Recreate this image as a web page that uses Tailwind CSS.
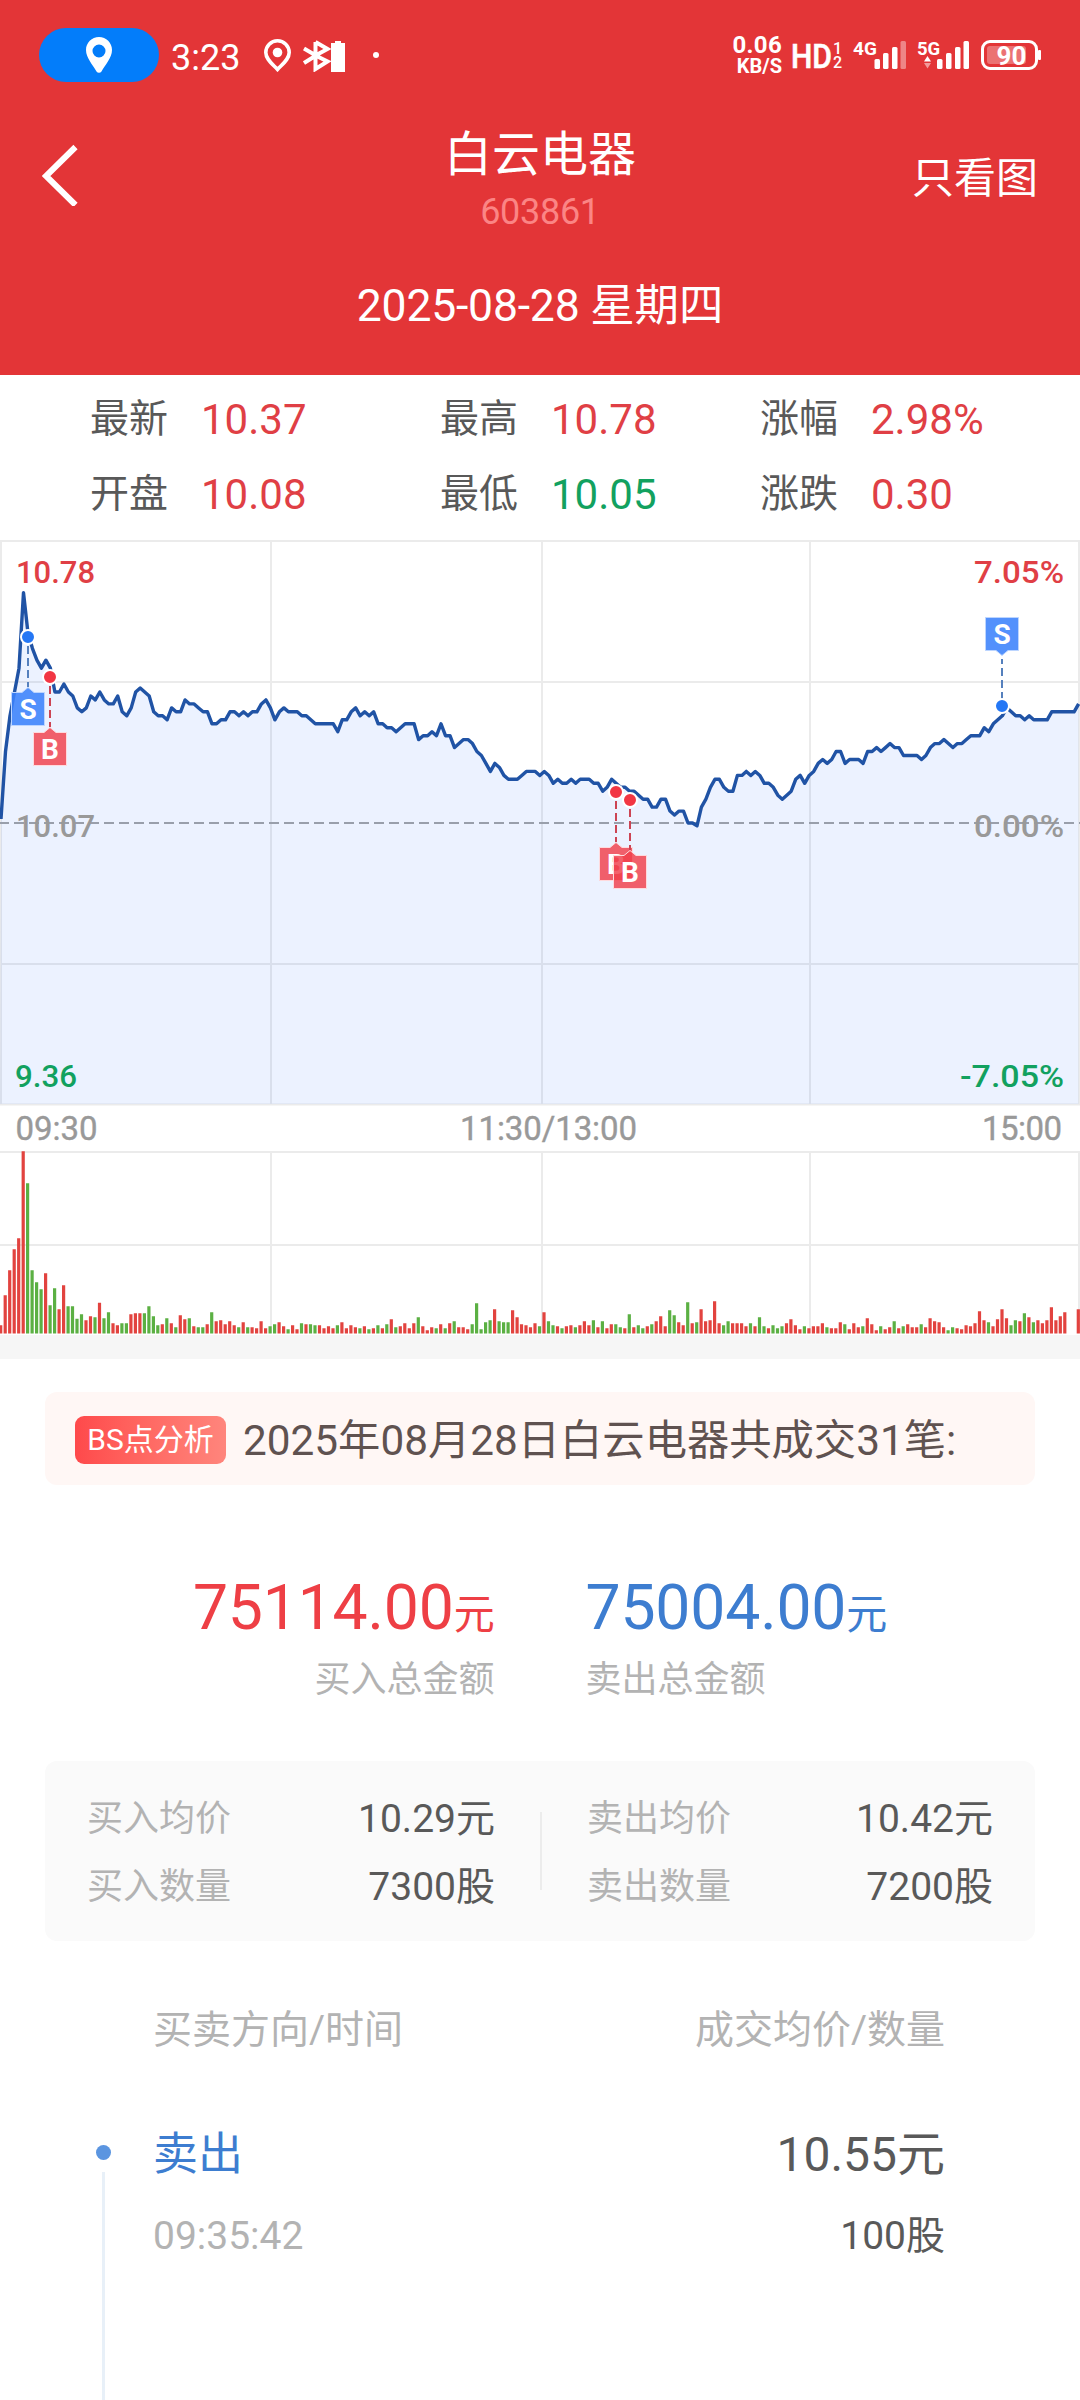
<!DOCTYPE html>
<html lang="zh-CN">
<head>
  <meta charset="UTF-8">
  <meta name="viewport" content="width=device-width, initial-scale=1.0">
  <title>白云电器 603861</title>
  <script src="https://cdn.jsdelivr.net/npm/@tailwindcss/browser@4"></script>
</head>
<body class="w-[1080px] h-[2400px] overflow-hidden bg-white font-['Roboto','Noto_Sans_CJK_SC',sans-serif] text-[#595959]">
  <header class="h-[375px] bg-[#e33537] text-white">
    <!-- Status bar -->
    <div class="flex h-[110px] items-center justify-between pl-[39px] pr-[39px]">
      <div class="flex items-center">
        <div class="flex h-[54px] w-[120px] items-center justify-center rounded-full bg-[#037dfa]">
          <svg class="h-9 w-[26px]" viewBox="0 0 26 36">
            <path fill="#fff" fill-rule="evenodd" d="M13 0C5.800 0 0 5.800 0 13c0 8 7 15 10.500 21.500a3 3 0 0 0 5 0C19 28 26 21 26 13 26 5.800 20.200 0 13 0Zm0 7.500a6.500 6.500 0 1 1 0 13 6.500 6.500 0 0 1 0-13Z"/>
          </svg>
        </div>
        <span class="ml-3 w-[69px] pt-1.5 text-4xl leading-10">3:23</span>
        <svg class="ml-6 h-[33px] w-[27px]" viewBox="0 0 27 33">
          <path fill="none" stroke="#fff" stroke-width="3.600" d="M13.500 1.800C7 1.800 1.800 7 1.800 13.500c0 6.500 6 11 11.700 17 5.700-6 11.700-10.500 11.700-17C25.200 7 20 1.800 13.500 1.800Z"/>
          <circle cx="13.500" cy="13.500" r="4.800" fill="#fff"/>
        </svg>
        <svg class="ml-3 h-[33px] w-[42px]" viewBox="0 0 42 33">
          <path fill="none" stroke="#fff" stroke-width="4" d="M1 9.500 13 16.500 1 24M12.500 3v27l12-7.500L12.500 16.500l12-6.500L12.500 3"/>
          <path fill="#fff" d="M28 4h4V2h6v2h4v29H28Z"/>
        </svg>
        <span class="ml-7 size-1.5 rounded-full bg-white"></span>
      </div>
      <div class="flex items-center">
        <div class="flex w-[49px] flex-col items-end font-bold">
          <span class="text-2xl leading-[22px] tracking-[0.3px]">0.06</span>
          <span class="text-xl leading-[21px]">KB/S</span>
        </div>
        <svg class="ml-[9px] h-[34px] w-[54px] overflow-visible" viewBox="0 0 54 34" fill="#fff">
          <text x="0" y="30" font-size="33" font-weight="500" stroke="#fff" stroke-width=".6" textLength="41" lengthAdjust="spacingAndGlyphs">HD</text>
          <text x="42" y="16" font-size="16" font-weight="500">1</text>
          <text x="42" y="29.500" font-size="16" font-weight="500">2</text>
        </svg>
        <svg class="ml-2 h-7 w-[54px] overflow-visible" viewBox="0 0 54 28" fill="#fff">
          <text x="0" y="14" font-size="19" font-weight="700">4G</text>
          <rect x="21.500" y="18" width="5.500" height="10" rx="1.500"/>
          <rect x="30" y="12" width="5.500" height="16" rx="1.500"/>
          <rect x="39" y="6" width="5.500" height="22" rx="1.500"/>
          <rect x="47.500" y="0" width="5.500" height="28" rx="1.500" fill-opacity=".4"/>
        </svg>
        <svg class="ml-[11px] h-7 w-[53px] overflow-visible" viewBox="0 0 53 28" fill="#fff">
          <text x="-1" y="14" font-size="18.500" font-weight="700">5G</text>
          <path d="M6 20.500 9.500 15l3.500 5.500Z"/>
          <path fill-opacity=".5" d="M6 22h7l-3.500 5.500Z"/>
          <rect x="19" y="18" width="5.500" height="10" rx="1.500"/>
          <rect x="28" y="12" width="5.500" height="16" rx="1.500"/>
          <rect x="37" y="6" width="5.500" height="22" rx="1.500"/>
          <rect x="45.500" y="0" width="5.500" height="28" rx="1.500"/>
        </svg>
        <svg class="ml-[10px] h-[30px] w-[60px]" viewBox="0 0 60 30">
          <rect x="1.500" y="1.500" width="54" height="27" rx="7.500" fill="none" stroke="#fff" stroke-width="3"/>
          <rect x="6" y="6" width="39" height="18" rx="3" fill="#fff" fill-opacity=".3"/>
          <rect x="57" y="10" width="3" height="10" rx="1" fill="#fff"/>
          <text x="15.500" y="24.500" font-size="26" font-weight="700" fill="#fff">90</text>
        </svg>
      </div>
    </div>

    <!-- Title bar -->
    <div class="grid h-[130px] grid-cols-[1fr_400px_1fr] items-center">
      <svg class="ml-[42px] h-[62px] w-9" viewBox="0 0 36 62" fill="none" stroke="#fff" stroke-width="6">
        <path d="M33.500 3 4 32 33.500 61"/>
      </svg>
      <div class="flex flex-col items-center pt-[7px]">
        <h1 class="text-5xl leading-[66px]">白云电器</h1>
        <p class="text-4xl leading-[48px] tracking-[-0.3px] text-[#fb8585]">603861</p>
      </div>
      <button class="justify-self-end pt-2 pr-[42px] text-[42px] leading-[60px]">只看图</button>
    </div>
    <p class="pt-9 text-center text-[44.500px] leading-[60px] tracking-[-0.2px]">2025-08-28 星期四</p>
  </header>

  <!-- Quotes -->
  <section class="grid h-[165px] grid-cols-[350px_320px_1fr] grid-rows-[75px_75px] pt-[7px] pl-[90px] text-[42px] text-[#e03f45]">
    <div class="flex items-center"><span class="w-[111px] text-[39px] text-[#595959]">最新</span>10.37</div>
    <div class="flex items-center"><span class="w-[111px] text-[39px] text-[#595959]">最高</span>10.78</div>
    <div class="flex items-center"><span class="w-[111px] text-[39px] text-[#595959]">涨幅</span>2.98%</div>
    <div class="flex items-center"><span class="w-[111px] text-[39px] text-[#595959]">开盘</span>10.08</div>
    <div class="flex items-center text-[#12a15f]"><span class="w-[111px] text-[39px] text-[#595959]">最低</span>10.05</div>
    <div class="flex items-center"><span class="w-[111px] text-[39px] text-[#595959]">涨跌</span>0.30</div>
  </section>

  <!-- Price chart, y = 283 is the previous close -->
  <svg class="block h-[566px] w-[1080px]" viewBox="0 0 1080 566">
    <g fill="none" stroke="#ebebeb" stroke-width="2">
      <path d="M0 1H1080M0 142H1080M0 424H1080M0 564.500H1080"/>
      <path d="M1 0V565M271 0V565M542 0V565M810 0V565M1079 0V565"/>
    </g>
    <path id="area" fill="#2e74ff" fill-opacity=".09"/>
    <path d="M0 283H1080" stroke="#999fab" stroke-width="2" stroke-dasharray="10 5" stroke-dashoffset="1"/>
    <path id="line" fill="none" stroke="#2053a5" stroke-width="3.400" stroke-linejoin="round"/>
    <g font-size="32" font-weight="500">
      <text x="16" y="42.500" fill="#e03f45" textLength="79" lengthAdjust="spacingAndGlyphs">10.78</text>
      <text x="16" y="296.500" fill="#999" textLength="79" lengthAdjust="spacingAndGlyphs">10.07</text>
      <text x="15" y="547" fill="#12a15f" textLength="62" lengthAdjust="spacingAndGlyphs">9.36</text>
      <text x="974" y="42.500" fill="#e03f45" textLength="90" lengthAdjust="spacingAndGlyphs">7.05%</text>
      <text x="974" y="296.500" fill="#999" textLength="90" lengthAdjust="spacingAndGlyphs">0.00%</text>
      <text x="960" y="547" fill="#12a15f" textLength="104" lengthAdjust="spacingAndGlyphs">-7.05%</text>
    </g>
    <!-- Trade markers -->
    <g stroke-width="2" font-size="28" font-weight="700" text-anchor="middle">
      <g transform="translate(28 97)">
        <path d="M0 9V50" stroke="#5580bd" stroke-dasharray="8 4"/>
        <circle r="7" fill="#2477f5" stroke="#fff"/>
        <path d="M-16.500 55.500H-6L0 50.500 6 55.500H16.500V88.500H-16.500Z" fill="#3b82fc" fill-opacity=".88" stroke="#bcd5ff" stroke-width="1"/>
        <text y="82" fill="#fff">S</text>
      </g>
      <g transform="translate(50 137)">
        <path d="M0 9V50" stroke="#cc4453" stroke-dasharray="8 4"/>
        <circle r="7" fill="#f23643" stroke="#fff"/>
        <path d="M-16.500 55.500H-6L0 50.500 6 55.500H16.500V88.500H-16.500Z" fill="#f03e4a" fill-opacity=".82" stroke="#ffdadd" stroke-width="1"/>
        <text y="82" fill="#fff">B</text>
      </g>
      <g transform="translate(616 252)">
        <path d="M0 9V50" stroke="#cc4453" stroke-dasharray="8 4"/>
        <circle r="7" fill="#f23643" stroke="#fff"/>
        <path d="M-16.500 55.500H-6L0 50.500 6 55.500H16.500V88.500H-16.500Z" fill="#f03e4a" fill-opacity=".82" stroke="#ffdadd" stroke-width="1"/>
        <text y="82" fill="#fff">B</text>
      </g>
      <g transform="translate(630 260)">
        <path d="M0 9V50" stroke="#cc4453" stroke-dasharray="8 4"/>
        <circle r="7" fill="#f23643" stroke="#fff"/>
        <path d="M-16.500 55.500H-6L0 50.500 6 55.500H16.500V88.500H-16.500Z" fill="#f03e4a" fill-opacity=".82" stroke="#ffdadd" stroke-width="1"/>
        <text y="82" fill="#fff">B</text>
      </g>
      <g transform="translate(1002 166)">
        <path d="M0 -6V-47" stroke="#5580bd" stroke-dasharray="8 4"/>
        <circle r="7" fill="#2477f5" stroke="#fff"/>
        <path d="M-16.500 -55.500H-6L0 -50.500 6 -55.500H16.500V-88.500H-16.500Z" fill="#3b82fc" fill-opacity=".88" stroke="#bcd5ff" stroke-width="1"/>
        <text y="-62" fill="#fff">S</text>
      </g>
    </g>
  </svg>

  <!-- Time axis -->
  <svg class="block h-[45px] w-[1080px]" viewBox="0 0 1080 45" font-size="33" fill="#999" stroke="#999" stroke-width=".4">
    <text x="15.500" y="34" textLength="82">09:30</text>
    <text x="460" y="34" textLength="177">11:30/13:00</text>
    <text x="982" y="34" textLength="80">15:00</text>
  </svg>

  <!-- Volume -->
  <svg class="block h-[184px] w-[1080px]" viewBox="0 0 1080 184">
    <g fill="none" stroke="#ebebeb" stroke-width="2">
      <path d="M0 1H1080M0 94H1080"/>
      <path d="M271 0V182M542 0V182M810 0V182M1079 0V182"/>
    </g>
    <path id="vol-up" stroke="#e2433f" stroke-width="3.200"/>
    <path id="vol-down" stroke="#5bb043" stroke-width="3.200"/>
  </svg>
  <div class="h-6 bg-[#f6f6f6]"></div>

  <main class="px-[45px] pt-[33px]">
    <div class="flex h-[93px] items-center rounded-xl bg-[#fff7f5] pl-[30px]">
      <span class="mt-0.5 flex h-12 w-[151px] items-center justify-center rounded-[9px] bg-linear-to-r from-[#fe494b] to-[#ff857c] text-3xl leading-none text-white">BS点分析</span>
      <p class="mt-1 ml-[17px] text-[42.300px] leading-[60px] text-[#5f5250]">2025年08月28日白云电器共成交31笔:</p>
    </div>

    <div class="grid grid-cols-2 gap-x-[91px] pt-[82px]">
      <div class="flex flex-col items-end text-[#ee3f45]">
        <p class="h-[82px] text-[62.500px] leading-[82px] tracking-[-0.2px]">75114.00<span class="text-[41px] leading-none">元</span></p>
        <p class="text-4xl leading-[62px] text-[#b3b3b3]">买入总金额</p>
      </div>
      <div class="flex flex-col text-[#3d7dd0]">
        <p class="h-[82px] text-[62.500px] leading-[82px] tracking-[-0.2px]">75004.00<span class="text-[41px] leading-none">元</span></p>
        <p class="text-4xl leading-[62px] text-[#b3b3b3]">卖出总金额</p>
      </div>
    </div>

    <div class="mt-[50px] flex h-[180px] items-center rounded-xl bg-[#fafafa] px-[42px] text-[39px] leading-[68px]">
      <div class="w-[408px] pt-1">
        <div class="flex justify-between"><span class="text-4xl leading-[68px] text-[#b3b3b3]">买入均价</span>10.29元</div>
        <div class="flex justify-between"><span class="text-4xl leading-[68px] text-[#b3b3b3]">买入数量</span>7300股</div>
      </div>
      <div class="mx-[45px] h-[78px] w-0.5 bg-[#ececec]"></div>
      <div class="flex-1 pt-1">
        <div class="flex justify-between"><span class="text-4xl leading-[68px] text-[#b3b3b3]">卖出均价</span>10.42元</div>
        <div class="flex justify-between"><span class="text-4xl leading-[68px] text-[#b3b3b3]">卖出数量</span>7200股</div>
      </div>
    </div>

    <div class="flex justify-between pt-[59px] pr-[90px] pl-[108px] text-[39px] leading-[60px] text-[#b3b3b3]">
      <span>买卖方向/时间</span>
      <span>成交均价/数量</span>
    </div>

    <div class="flex pt-[65px] pr-[90px]">
      <div class="flex w-[117px] flex-col items-center pt-[20px]">
        <span class="size-[15px] rounded-full bg-[#5b95e0]"></span>
        <span class="mt-3 h-[300px] w-[3px] bg-[#e8f0f8]"></span>
      </div>
      <div class="-ml-[9px] flex-1">
        <div class="flex h-[60px] items-center justify-between"><span class="text-[45px] text-[#3d7dd0]">卖出</span><span class="text-5xl">10.55元</span></div>
        <div class="mt-[21px] flex h-[60px] items-center justify-between text-[39px]"><span class="text-[#b3b3b3]">09:35:42</span><span>100股</span></div>
      </div>
    </div>
  </main>

  <script>
    // one value per minute, in ticks above the previous close
    const prices = [
      1, 18, 27, 33, 39, 58, 48, 44, 41, 39, 41, 39, 33, 33, 35, 33, 32, 29, 28, 29,
      32, 31, 33, 31, 30, 30, 32, 28, 27, 29, 33, 34, 33, 32, 28, 27, 27, 26, 29, 28,
      28, 31, 30, 30, 29, 28, 28, 25, 25, 26, 26, 28, 28, 27, 28, 27, 28, 28, 30, 31,
      29, 26, 28, 29, 28, 28, 28, 27, 27, 26, 25, 25, 25, 25, 25, 23, 26, 26, 28, 29,
      27, 28, 27, 28, 25, 25, 24, 24, 23, 24, 25, 25, 25, 21, 22, 22, 23, 22, 25, 22,
      22, 19, 20, 21, 21, 20, 18, 17, 15, 13, 15, 14, 12, 11, 11, 11, 12, 13, 13, 13,
      12, 13, 12, 10, 11, 10, 10, 11, 10, 11, 11, 11, 10, 10, 8, 9, 11, 10, 9, 9,
      8, 8, 7, 6, 6, 4, 4, 6, 6, 3, 2, 3, 3, 0, 0, -0.7, 4, 6, 9, 11,
      11, 9, 8, 8, 12, 12, 13, 12, 13, 12, 10, 10, 9, 7, 6, 7, 8, 11, 12, 10,
      12, 13, 15, 16, 15, 16, 18, 18, 15, 16, 16, 16, 15, 18, 18, 19, 18, 19, 20, 19,
      19, 17, 17, 17, 17, 16, 17, 19, 20, 20, 21, 20, 19, 20, 20, 21, 22, 22, 22, 24,
      23, 25, 26, 27, 29, 28, 27, 27, 26, 27, 26, 26, 26, 26, 28, 28, 28, 28, 28, 28,
      30
    ];

    // bar heights in thirds of a pixel, negative for a falling minute
    const volumes = [
      25, 115, 190, 253, 286, 547, -451, -190, -154, -133, 181, -85, -136, 73, 145, -82, -82, -44, -58, 40,
      52, -49, 92, -46, -64, 31, 25, -31, -31, 58, 61, 61, -61, -82, -52, -25, 28, -46, 31, -19,
      55, 43, -46, 22, -19, -19, 28, -64, 37, 40, 28, 37, 25, -19, 34, -19, 19, 16, 37, 16,
      -22, -28, 34, 22, -13, 25, 13, -31, 28, -28, -25, 25, 16, 22, 16, -25, 34, 16, 25, 19,
      -16, 22, -13, 16, -25, 16, -28, 43, -19, 22, 31, 16, 31, -49, 22, 10, 19, -16, 28, -16,
      31, -37, 19, 19, 13, -28, -91, -13, -34, -40, 73, -37, -34, -34, 70, 49, 28, 25, 19, 31,
      -22, 64, -37, -25, 22, -16, 22, 25, -19, 25, 37, 25, -40, 19, -37, 16, 28, -28, -19, 16,
      -58, 19, -25, -16, 22, -28, 37, 52, 22, -70, -55, 34, 25, -94, 31, -34, 73, 37, 40, 97,
      31, -25, -37, 31, 31, 31, 22, -31, 22, -49, -22, 16, -25, -16, -22, 31, 43, 25, 13, -22,
      16, 22, 22, 31, -19, 16, 16, 34, -28, 13, 31, 19, -22, 46, 28, 10, -22, 13, 19, -37,
      16, -22, 28, 19, 19, -28, 19, 46, 37, 34, 19, -10, -19, 16, 13, 25, 22, 31, 67, 40,
      -34, 22, 43, 73, 46, -25, -40, 37, -61, 49, -34, 40, 31, 40, 79, 40, 52, 64, 0, 0,
      73
    ];

    const step = 4.49;
    const points = prices.map((p, i) => `${(i * step + 1).toFixed(1)} ${(283 - p * 3.97).toFixed(1)}`).join('L');
    document.getElementById('line').setAttribute('d', 'M' + points);
    document.getElementById('area').setAttribute('d', 'M' + points + 'V564H0Z');

    let up = '';
    let down = '';
    volumes.forEach((v, i) => {
      if (!v) return;
      const bar = `M${(i * step + 0.7).toFixed(1)} 182.500v${(-Math.abs(v) / 3).toFixed(1)}`;
      if (v > 0) up += bar;
      else down += bar;
    });
    document.getElementById('vol-up').setAttribute('d', up);
    document.getElementById('vol-down').setAttribute('d', down);
  </script>
</body>
</html>
